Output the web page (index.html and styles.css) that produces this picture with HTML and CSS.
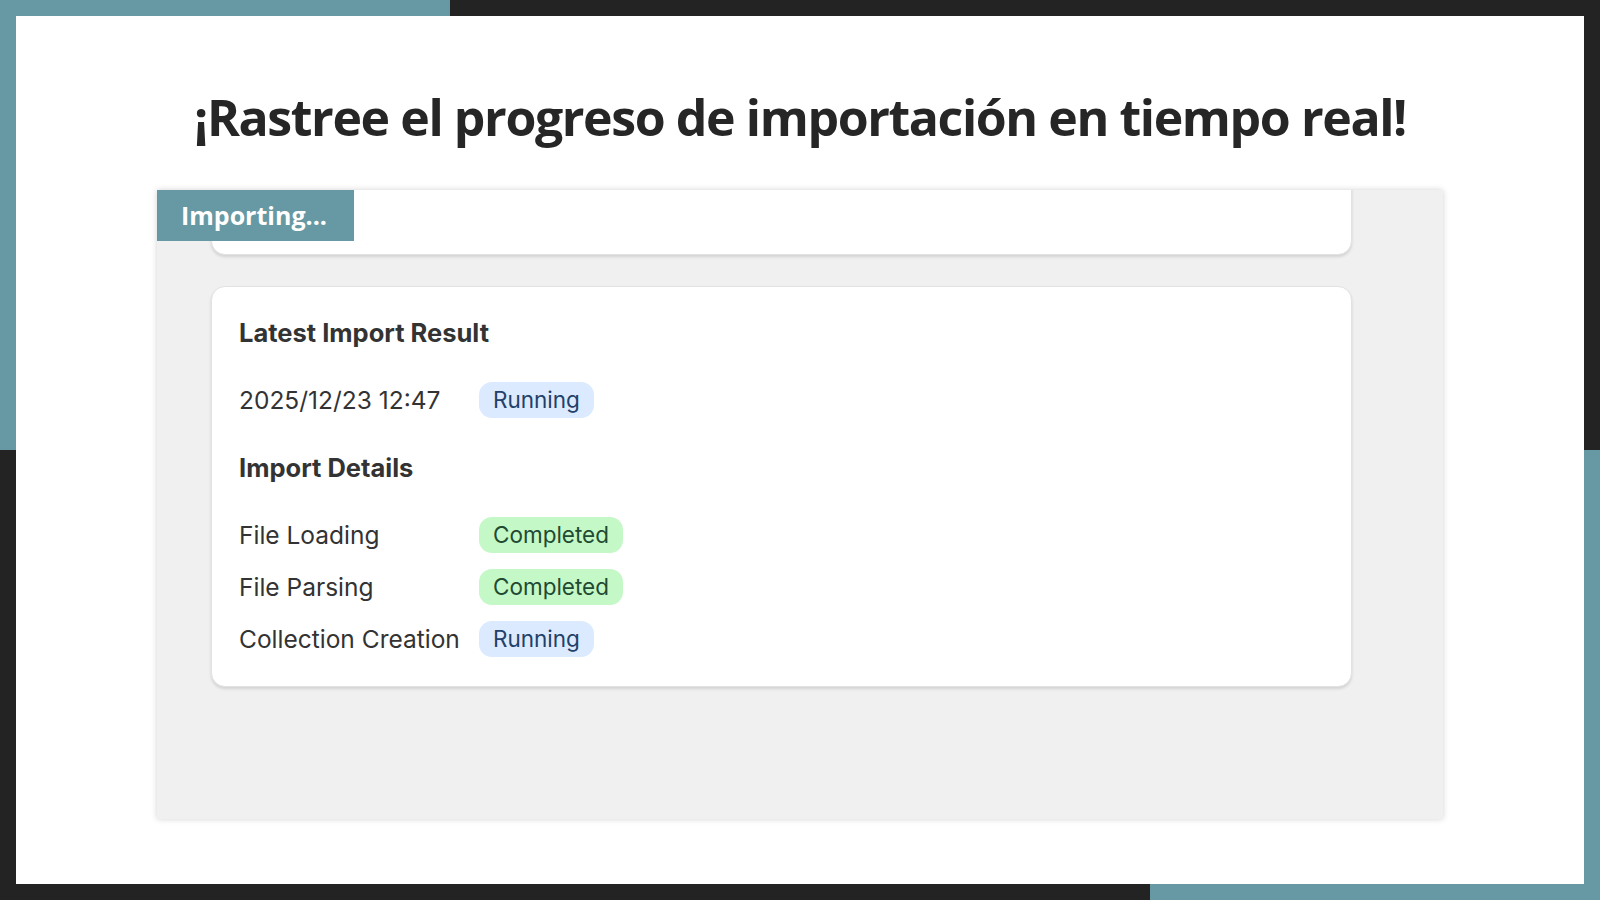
FILE: index.html
```html
<!DOCTYPE html>
<html lang="es">
<head>
    <meta charset="UTF-8">
    <meta name="viewport" content="width=device-width, initial-scale=1.0">
    <title>Rastree el progreso de importación</title>
    <link rel="stylesheet" href="styles.css">
</head>
<body>
    <div class="slide">
        <h1>¡Rastree el progreso de importación en tiempo real!</h1>

        <div class="shot">
            <div class="tag">Importing...</div>

            <div class="shot-body">
                <div class="card card-cut"></div>

                <div class="card">
                    <h3>Latest Import Result</h3>
                    <div class="row">
                        <span class="label">2025/12/23 12:47</span>
                        <span class="badge running">Running</span>
                    </div>

                    <h3 class="details-title">Import Details</h3>
                    <div class="steps">
                        <div class="row">
                            <span class="label">File Loading</span>
                            <span class="badge done">Completed</span>
                        </div>
                        <div class="row">
                            <span class="label">File Parsing</span>
                            <span class="badge done">Completed</span>
                        </div>
                        <div class="row">
                            <span class="label">Collection Creation</span>
                            <span class="badge running">Running</span>
                        </div>
                    </div>
                </div>
            </div>
        </div>
    </div>
</body>
</html>
```

FILE: styles.css
```css
html, body {
    margin: 0;
    height: 100%;
}
body {
    box-sizing: border-box;
    padding: 16px;
    background:
        linear-gradient(#6699a3, #6699a3) left top / 450px 450px no-repeat,
        linear-gradient(#6699a3, #6699a3) right bottom / 450px 450px no-repeat,
        #232323;
}
.slide {
    height: 100%;
    background: #fff;
    display: flex;
    flex-direction: column;
    align-items: center;
}
h1 {
    margin: 68px 0 0;
    font-family: "Open Sans", sans-serif;
    font-weight: 700;
    font-size: 50px;
    letter-spacing: -1.4px;
    line-height: 67px;
    color: #262626;
}
.shot {
    position: relative;
    box-sizing: border-box;
    width: 1286px;
    height: 629px;
    margin-top: 39px;
    background: #f0f0f0;
    overflow: hidden;
    box-shadow: 0 0 6px rgba(0, 0, 0, 0.18);
}
.tag {
    position: absolute;
    top: 0;
    left: 0;
    z-index: 2;
    box-sizing: border-box;
    width: 197px;
    height: 51px;
    padding-left: 24px;
    background: #6699a3;
    color: #fff;
    font-family: "Open Sans", sans-serif;
    font-weight: 700;
    font-size: 25px;
    line-height: 51px;
}
.shot-body {
    padding: 0 91px 0 54px;
}
.card {
    background: #fff;
    border: 1px solid #e2e2e2;
    border-radius: 14px;
    box-shadow: 0 2px 3px rgba(0, 0, 0, 0.12);
    padding: 28px 27px 29px;
    font-family: Inter, sans-serif;
    color: #333;
}
.card-cut {
    height: 42px;
    margin-top: -36px;
    margin-bottom: 31px;
}
.card h3 {
    margin: 0 0 31px;
    font-size: 25.5px;
    line-height: 36px;
    font-weight: 700;
    color: #333;
}
.card .details-title {
    margin-top: 32px;
    margin-bottom: 31px;
}
.row {
    display: flex;
    align-items: center;
    height: 36px;
}
.steps {
    display: flex;
    flex-direction: column;
    gap: 16px;
}
.label {
    width: 240px;
    font-size: 24.5px;
    color: #333;
}
.badge {
    box-sizing: border-box;
    height: 36px;
    padding: 0 14px;
    border-radius: 13px;
    font-size: 22.5px;
    line-height: 36px;
    font-weight: 400;
}
.running {
    background: #dbeafe;
    color: #22406a;
}
.done {
    background: #c4f8c6;
    color: #1f4a33;
}
```
